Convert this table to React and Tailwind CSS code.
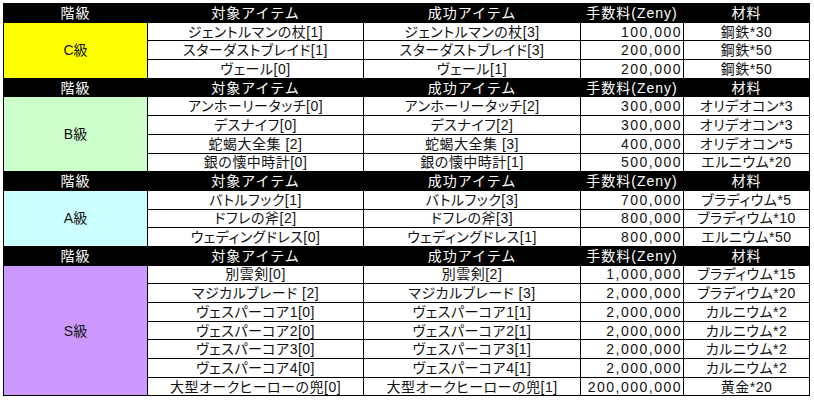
const sections = [
  {
    label: 'C級',
    bg: 'bg-[#ffff00]',
    rows: [
      ['ジェントルマンの杖[1]', 'ジェントルマンの杖[3]', '100,000', '鋼鉄*30'],
      ['スターダストブレイド[1]', 'スターダストブレイド[3]', '200,000', '鋼鉄*50'],
      ['ヴェール[0]', 'ヴェール[1]', '200,000', '鋼鉄*50'],
    ],
  },
  {
    label: 'B級',
    bg: 'bg-[#ccffcc]',
    rows: [
      ['アンホーリータッチ[0]', 'アンホーリータッチ[2]', '300,000', 'オリデオコン*3'],
      ['デスナイフ[0]', 'デスナイフ[2]', '300,000', 'オリデオコン*3'],
      ['蛇蝎大全集 [2]', '蛇蝎大全集 [3]', '400,000', 'オリデオコン*5'],
      ['銀の懐中時計[0]', '銀の懐中時計[1]', '500,000', 'エルニウム*20'],
    ],
  },
  {
    label: 'A級',
    bg: 'bg-[#ccffff]',
    rows: [
      ['バトルフック[1]', 'バトルフック[3]', '700,000', 'ブラディウム*5'],
      ['ドフレの斧[2]', 'ドフレの斧[3]', '800,000', 'ブラディウム*10'],
      ['ウェディングドレス[0]', 'ウェディングドレス[1]', '800,000', 'エルニウム*50'],
    ],
  },
  {
    label: 'S級',
    bg: 'bg-[#cc99ff]',
    rows: [
      ['別雲剣[0]', '別雲剣[2]', '1,000,000', 'ブラディウム*15'],
      ['マジカルブレード [2]', 'マジカルブレード [3]', '2,000,000', 'ブラディウム*20'],
      ['ヴェスパーコア1[0]', 'ヴェスパーコア1[1]', '2,000,000', 'カルニウム*2'],
      ['ヴェスパーコア2[0]', 'ヴェスパーコア2[1]', '2,000,000', 'カルニウム*2'],
      ['ヴェスパーコア3[0]', 'ヴェスパーコア3[1]', '2,000,000', 'カルニウム*2'],
      ['ヴェスパーコア4[0]', 'ヴェスパーコア4[1]', '2,000,000', 'カルニウム*2'],
      ['大型オークヒーローの兜[0]', '大型オークヒーローの兜[1]', '200,000,000', '黄金*20'],
    ],
  },
];

const cell = 'border border-black p-0 leading-none h-[18.7px]';
const head = `${cell} font-normal text-center tracking-[1px]`;
const body = `${cell} text-center tracking-[0.5px] [font-feature-settings:'palt']`;

function HeaderRow() {
  return (
    <tr className="bg-black text-white">
      <th className={head}>階級</th>
      <th className={head}>対象アイテム</th>
      <th className={head}>成功アイテム</th>
      <th className={head}>手数料(Zeny)</th>
      <th className={head}>材料</th>
    </tr>
  );
}

function Section({ section }) {
  return (
    <>
      <HeaderRow />
      {section.rows.map((row, i) => (
        <tr key={i} className="bg-white">
          {i === 0 && (
            <td rowSpan={section.rows.length} className={`${cell} ${section.bg} text-center`}>
              {section.label}
            </td>
          )}
          <td className={body}>{row[0]}</td>
          <td className={body}>{row[1]}</td>
          <td className={`${cell} text-right pr-px tracking-[1.5px]`}>{row[2]}</td>
          <td className={body}>{row[3]}</td>
        </tr>
      ))}
    </>
  );
}

export default function App() {
  return (
    <div className="w-[814px] h-[401px] bg-white pt-[3px] pl-[3px] font-['Liberation_Sans','Noto_Sans_CJK_JP',sans-serif] text-[14px] text-[#111]">
      <table className="table-fixed border-collapse w-[806px]">
        <colgroup>
          <col className="w-[144px]" />
          <col className="w-[216px]" />
          <col className="w-[217px]" />
          <col className="w-[103px]" />
          <col className="w-[126px]" />
        </colgroup>
        <tbody>
          {sections.map((s) => (
            <Section key={s.label} section={s} />
          ))}
        </tbody>
      </table>
    </div>
  );
}
